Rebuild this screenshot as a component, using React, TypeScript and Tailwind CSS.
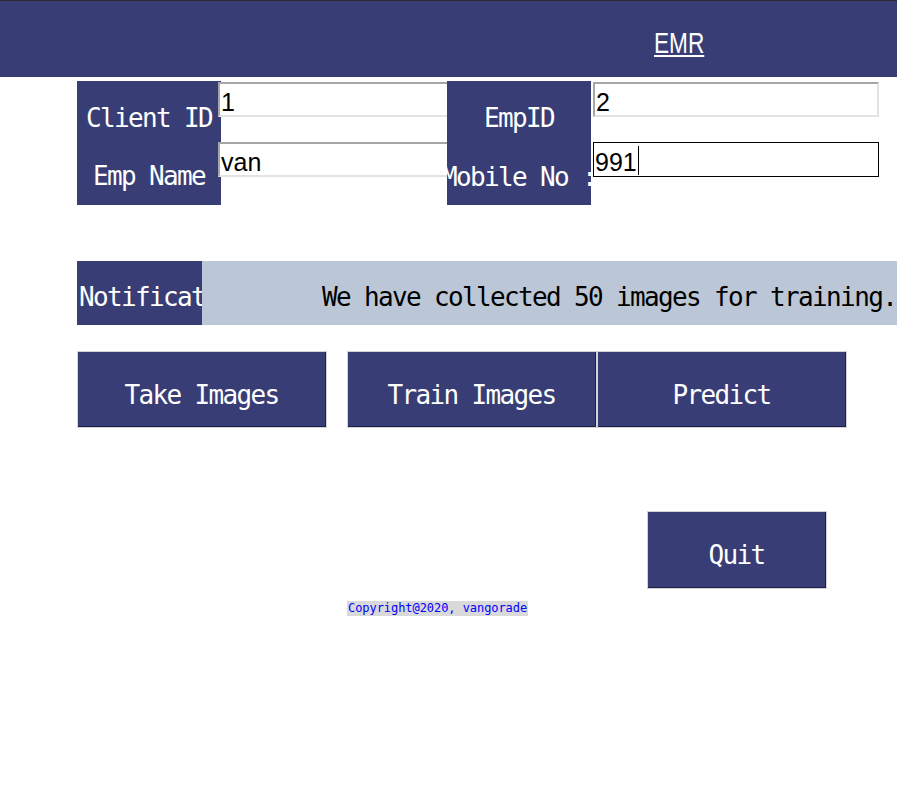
import React from "react";

const mono = { fontFamily: '"DejaVu Sans Mono", "Liberation Mono", monospace' };
const sans = { fontFamily: '"Liberation Sans", Arial, sans-serif' };

function Label({ text, extra = "" }: { text: string; extra?: string }) {
  return (
    <div
      className={`h-[62px] w-[144px] overflow-hidden flex items-center justify-center whitespace-nowrap text-white text-[26px] tracking-[-1.65px] ${extra}`}
      style={mono}
    >
      <span>{text}</span>
    </div>
  );
}

function Field({ value, focused = false, extra = "" }: { value: string; focused?: boolean; extra?: string }) {
  return (
    <div
      className={`h-[35px] bg-white flex items-center pl-[1px] pt-[5px] text-[25px] text-black leading-none overflow-hidden whitespace-nowrap ${
        focused
          ? "border border-black"
          : "border-2 border-t-[#a6a6a6] border-l-[#a6a6a6] border-b-[#e3e3e3] border-r-[#e3e3e3]"
      } ${extra}`}
      style={sans}
    >
      <span>{value}</span>
      {focused && <span className="inline-block w-[1px] h-[29px] bg-black ml-[1px] mt-[-4px]" />}
    </div>
  );
}

function Btn({ text, w, h }: { text: string; w: string; h: string }) {
  return (
    <div className={`${w} ${h} border border-[#d4d4d4] bg-[#d4d4d4]`}>
      <div
        className="w-full h-full bg-[#383e75] border-b border-r border-[#1c2046] flex items-center justify-center pt-[12px] text-white text-[26px] tracking-[-1.65px] whitespace-nowrap"
        style={mono}
      >
        {text}
      </div>
    </div>
  );
}

export default function App() {
  return (
    <div className="w-[897px] h-[796px] bg-white overflow-hidden">
      {/* header */}
      <div className="h-[77px] bg-[#383e75] border-t border-[#2b2b2b] pl-[654px] pt-[26px]">
        <span
          className="inline-block origin-left scale-x-[0.78] text-white text-[29px] leading-[32px] underline underline-offset-[2px] decoration-[2px]"
          style={sans}
        >
          EMR
        </span>
      </div>

      {/* form */}
      <div className="mt-[4px] ml-[77px] flex h-[124px]">
        <div className="w-[144px] bg-[#383e75] flex flex-col">
          <Label text="Client ID" extra="pt-[12px]" />
          <Label text="Emp Name" extra="pt-[5px]" />
        </div>
        <div className="ml-[-3px] w-[229px] flex flex-col">
          <Field value="1" extra="mt-[1px] border-r-0" />
          <Field value="van" extra="mt-[25px] border-r-0" />
        </div>
        <div className="w-[144px] bg-[#383e75] flex flex-col">
          <Label text="EmpID" extra="pt-[12px]" />
          <Label text="Mobile No :" extra="pt-[6px]" />
        </div>
        <div className="ml-[2px] w-[286px] flex flex-col">
          <Field value="2" extra="mt-[1px]" />
          <Field value="991" focused extra="mt-[25px]" />
        </div>
      </div>

      {/* notification */}
      <div className="mt-[56px] ml-[77px] flex h-[64px]">
        <div
          className="w-[125px] bg-[#383e75] text-white flex items-center pl-[2px] pt-[9px] overflow-hidden whitespace-nowrap text-[26px] tracking-[-1.65px]"
          style={mono}
        >
          Notification :
        </div>
        <div
          className="flex-1 bg-[#bbc7d6] text-black flex items-center pl-[120px] pt-[9px] overflow-hidden whitespace-nowrap text-[26px] tracking-[-1.65px]"
          style={mono}
        >
          We have collected 50 images for training.
        </div>
      </div>

      {/* buttons */}
      <div className="mt-[26px] ml-[77px] flex">
        <Btn text="Take Images" w="w-[250px]" h="h-[77px]" />
        <div className="ml-[20px] flex">
          <Btn text="Train Images" w="w-[250px]" h="h-[77px]" />
          <Btn text="Predict" w="w-[250px]" h="h-[77px]" />
        </div>
      </div>

      {/* quit */}
      <div className="mt-[83px] ml-[647px]">
        <Btn text="Quit" w="w-[180px]" h="h-[78px]" />
      </div>

      {/* copyright */}
      <div className="mt-[12px] ml-[347px] flex">
        <div
          className="bg-[#d9d9d9] text-[#0000ff] text-[12px] leading-[15px] tracking-[-0.06px] px-[1px] whitespace-nowrap"
          style={mono}
        >
          Copyright@2020, vangorade
        </div>
      </div>
    </div>
  );
}
